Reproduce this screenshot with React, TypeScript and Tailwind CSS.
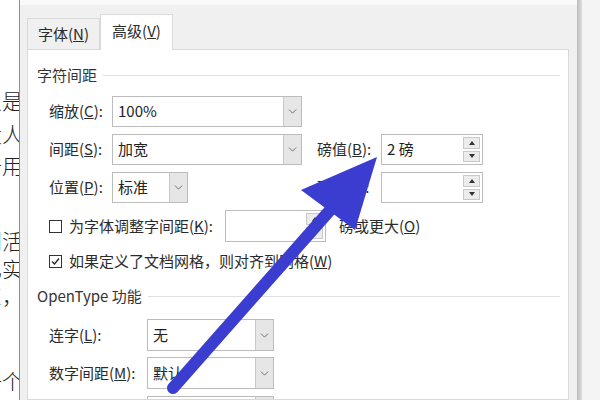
import React from 'react';
import { ChevronDown } from 'lucide-react';

// Combo box with the grey drop button on the right
const Select: React.FC<{ value: string; className: string }> = ({ value, className }) => (
  <div className={`flex h-full shrink-0 border border-[#bcbcbc] bg-white ${className}`}>
    <span className="flex flex-1 items-center pl-[5px] text-[15px] text-[#222]">{value}</span>
    <div className="flex w-[18px] items-center justify-center border-l border-[#c9c9c9] bg-[#e6e6e6]">
      <ChevronDown size={13} strokeWidth={1.5} className="text-[#555]" />
    </div>
  </div>
);

// Text box with the small up/down buttons
const Spin: React.FC<{ value: string; className: string }> = ({ value, className }) => (
  <div className={`flex h-full shrink-0 border border-[#bcbcbc] bg-white ${className}`}>
    <span className="flex flex-1 items-center pl-[5px] text-[15px] text-[#222]">{value}</span>
    <div className="flex w-[21px] flex-col gap-[2px] p-[2px]">
      <div className="flex flex-1 items-center justify-center border border-[#c9c9c9] bg-[#ececec]">
        <span className="h-0 w-0 border-x-[3px] border-b-[4px] border-x-transparent border-b-[#333]" />
      </div>
      <div className="flex flex-1 items-center justify-center border border-[#c9c9c9] bg-[#ececec]">
        <span className="h-0 w-0 border-x-[3px] border-t-[4px] border-x-transparent border-t-[#333]" />
      </div>
    </div>
  </div>
);

const Label: React.FC<{ text: string; k: string; className: string }> = ({ text, k, className }) => (
  <span className={`shrink-0 text-[15px] text-[#2b2b2b] ${className}`}>
    {text}(<span className="underline">{k}</span>):
  </span>
);

const GroupHeader: React.FC<{ title: string; className?: string }> = ({ title, className = '' }) => (
  <div className={`flex h-[20px] shrink-0 items-center pr-[8px] ${className}`}>
    <span className="text-[15px] text-[#333]">{title}</span>
    <div className="ml-[6px] h-px flex-1 bg-[#e0e0e0]" />
  </div>
);

const docLines: { text: string; cls: string }[] = [
  { text: '人是', cls: 'mt-[88px]' },
  { text: '大人', cls: 'mt-[9px]' },
  { text: '普用', cls: 'mt-[8px]' },
  { text: '到活', cls: 'mt-[51px]' },
  { text: '已实', cls: 'mt-[4px]' },
  { text: '东，', cls: 'mt-[3px]' },
  { text: '一个', cls: 'mt-[61px]' },
];

export default function App() {
  return (
    <div className="relative flex h-[400px] w-[600px] overflow-hidden bg-white font-['Noto_Sans_CJK_SC','Noto_Sans',sans-serif]">
      {/* document page behind the dialog */}
      <div className="w-[19px] shrink-0 overflow-hidden bg-white">
        <div className="ml-[-19px] flex w-[44px] flex-col text-[21px] leading-[24px] font-light text-[#222]">
          {docLines.map((l) => (
            <div key={l.text} className={`whitespace-nowrap ${l.cls}`}>{l.text}</div>
          ))}
        </div>
      </div>
      <div className="w-px shrink-0 bg-[#8f8f8f]" />

      {/* dialog */}
      <div className="flex w-[557px] shrink-0 flex-col bg-[#f0f0f0]">
        <div className="h-[5px] shrink-0 bg-[#f9f9f9]" />
        <div className="flex h-[44px] shrink-0 items-end pl-[7px]">
          <div className="flex h-[31px] w-[73px] items-center justify-center border border-b-0 border-[#d9d9d9] text-[15px] text-[#2b2b2b]">
            字体(<span className="underline">N</span>)
          </div>
          <div className="relative z-10 -mb-px flex h-[36px] w-[73px] items-center justify-center border border-b-0 border-[#d9d9d9] bg-white pb-[3px] text-[15px] text-[#2b2b2b]">
            高级(<span className="underline">V</span>)
          </div>
        </div>

        <div className="ml-[7px] flex min-h-0 w-[542px] flex-1 flex-col overflow-hidden border border-[#d9d9d9] bg-white pl-[9px] pt-[15px]">
          <GroupHeader title="字符间距" />

          <div className="mt-[11px] flex h-[31px] shrink-0 items-center pl-[12px]">
            <Label text="缩放" k="C" className="w-[63px]" />
            <Select value="100%" className="w-[190px]" />
          </div>

          <div className="mt-[7px] flex h-[31px] shrink-0 items-center pl-[12px]">
            <Label text="间距" k="S" className="w-[63px]" />
            <div className="flex h-full w-[205px] shrink-0">
              <Select value="加宽" className="w-[190px]" />
            </div>
            <Label text="磅值" k="B" className="w-[64px]" />
            <Spin value="2 磅" className="w-[102px]" />
          </div>

          <div className="mt-[7px] flex h-[31px] shrink-0 items-center pl-[12px]">
            <Label text="位置" k="P" className="w-[63px]" />
            <div className="flex h-full w-[205px] shrink-0">
              <Select value="标准" className="w-[76px]" />
            </div>
            <Label text="磅值" k="Y" className="w-[64px]" />
            <Spin value="" className="w-[102px]" />
          </div>

          <div className="mt-[7px] flex h-[32px] shrink-0 items-center pl-[12px]">
            <div className="flex w-[176px] shrink-0 items-center">
              <span className="h-[13px] w-[13px] shrink-0 border border-[#333] bg-white" />
              <span className="ml-[7px] whitespace-nowrap text-[15px] text-[#2b2b2b]">
                为字体调整字间距(<span className="underline">K</span>):
              </span>
            </div>
            <Spin value="" className="w-[101px]" />
            <span className="ml-[13px] text-[15px] text-[#2b2b2b]">
              磅或更大(<span className="underline">O</span>)
            </span>
          </div>

          <div className="mt-[9px] flex h-[20px] shrink-0 items-center pl-[12px]">
            <span className="flex h-[13px] w-[13px] shrink-0 items-center justify-center border border-[#333] bg-white">
              <svg width="9" height="9" viewBox="0 0 9 9">
                <path d="M1 4.5 L3.5 7 L8 1.5" fill="none" stroke="#222" strokeWidth="1.3" />
              </svg>
            </span>
            <span className="ml-[7px] whitespace-nowrap text-[15px] text-[#2b2b2b]">
              如果定义了文档网格，则对齐到网格(<span className="underline">W</span>)
            </span>
          </div>

          <GroupHeader title="OpenType 功能" className="mt-[15px]" />

          <div className="mt-[13px] flex h-[32px] shrink-0 items-center pl-[12px]">
            <Label text="连字" k="L" className="w-[98px]" />
            <Select value="无" className="w-[127px]" />
          </div>

          <div className="mt-[6px] flex h-[32px] shrink-0 items-center pl-[12px]">
            <Label text="数字间距" k="M" className="w-[98px]" />
            <Select value="默认" className="w-[127px]" />
          </div>

          <div className="mt-[7px] flex h-[32px] shrink-0 items-center pl-[12px]">
            <Label text="数字形式" k="F" className="w-[98px]" />
            <Select value="默认" className="w-[127px]" />
          </div>
        </div>
      </div>

      <div className="w-[5px] shrink-0 bg-gradient-to-r from-[#bdbdbd] to-[#dedede]" />
      <div className="flex-1 bg-[#f4f4f4]" />

      {/* annotation arrow drawn over the dialog */}
      <svg className="pointer-events-none absolute left-0 top-0" width="600" height="400" viewBox="0 0 600 400">
        <line x1="173" y1="388" x2="332" y2="208" stroke="#3a3dcf" strokeWidth="12" strokeLinecap="round" />
        <polygon points="377,157 301,190 355,230" fill="#3a3dcf" />
      </svg>
    </div>
  );
}
